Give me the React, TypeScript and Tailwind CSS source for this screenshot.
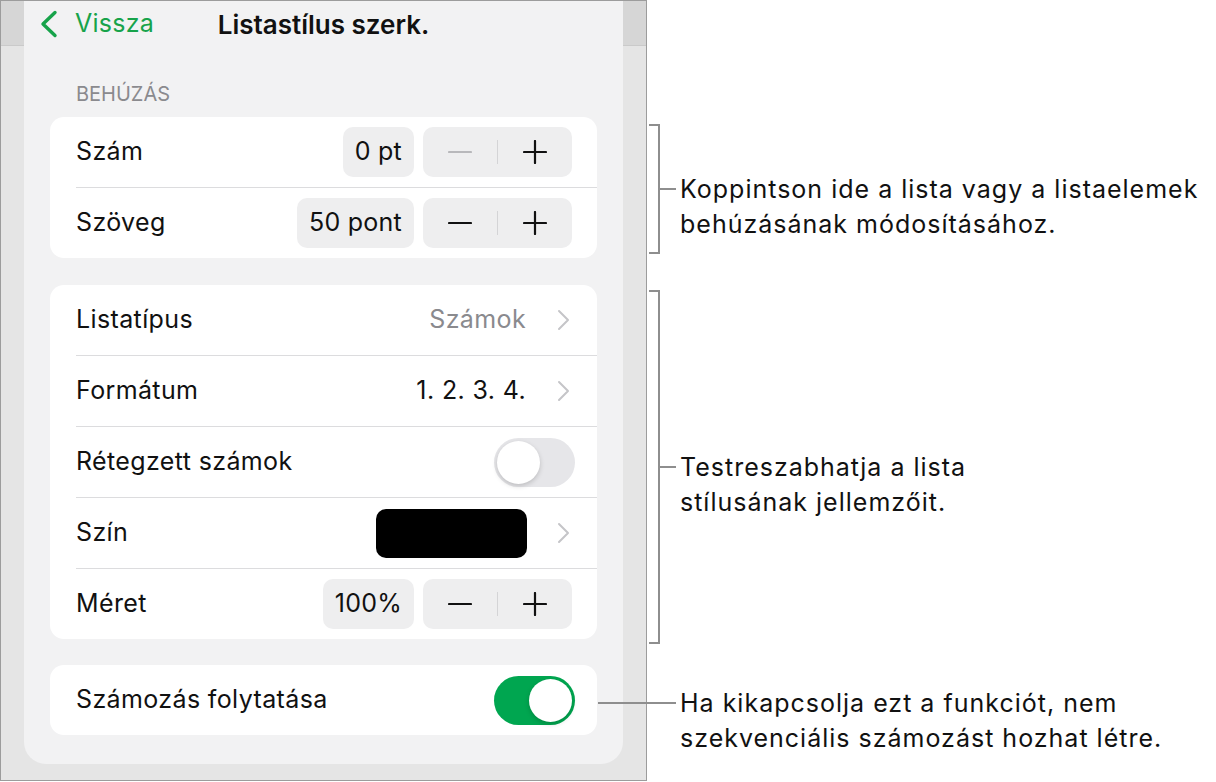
import type { ReactNode } from 'react'

const Chevron = () => (
  <svg width="14" height="24" viewBox="0 0 14 24" className="shrink-0">
    <path d="M3 3l9 9-9 9" stroke="#c5c5c8" strokeWidth="2" fill="none" strokeLinecap="round" strokeLinejoin="round" />
  </svg>
)

const Minus = ({ disabled }: { disabled?: boolean }) => (
  <svg width="24" height="24" viewBox="0 0 24 24">
    <path d="M1 12h22" stroke={disabled ? '#b8b8bb' : '#111'} strokeWidth="2.2" strokeLinecap="round" />
  </svg>
)

const Plus = () => (
  <svg width="24" height="24" viewBox="0 0 24 24">
    <path d="M1 12h22M12 1v22" stroke="#111" strokeWidth="2.2" strokeLinecap="round" />
  </svg>
)

const Stepper = ({ value, minusDisabled }: { value: string; minusDisabled?: boolean }) => (
  <div className="flex items-center gap-[9px]">
    <div className="flex h-[50px] items-center rounded-[10px] bg-[#eeeeef] px-[12px] text-[25px] tracking-[0.01em] text-[#111]">
      {value}
    </div>
    <div className="flex h-[50px] w-[149px] items-center rounded-[10px] bg-[#eeeeef]">
      <div className="flex flex-1 justify-center">
        <Minus disabled={minusDisabled} />
      </div>
      <div className="h-[24px] w-px bg-[#d4d4d6]" />
      <div className="flex flex-1 justify-center">
        <Plus />
      </div>
    </div>
  </div>
)

const Toggle = ({ on }: { on?: boolean }) => (
  <div
    className={
      on
        ? 'flex h-[49px] w-[81px] items-center justify-end rounded-full bg-[#00a650] p-[3px]'
        : 'flex h-[49px] w-[81px] items-center justify-start rounded-full bg-[#e6e6e9] p-[3px]'
    }
  >
    <div className="h-[43px] w-[43px] rounded-full bg-white shadow-[0_2px_5px_rgba(0,0,0,0.18)]" />
  </div>
)

const Row = ({ label, children, last }: { label: string; children?: ReactNode; last?: boolean }) => (
  <div
    className={
      last
        ? 'flex h-[70px] items-center justify-between pr-[25px]'
        : 'flex h-[71px] items-center justify-between border-b border-[#dcdcde] pr-[25px]'
    }
  >
    <span className="text-[25px] tracking-[0.015em] text-[#111]">{label}</span>
    {children}
  </div>
)

const Card = ({ children }: { children: ReactNode }) => (
  <div className="rounded-[14px] bg-white pl-[26px]">{children}</div>
)

const Callout = ({ lines }: { lines: string[] }) => (
  <div className="h-[34px]">
    <p className="pl-[4px] text-[25px] leading-[35px] tracking-[0.04em] text-[#111]">
      {lines.map((l) => (
        <span key={l} className="block whitespace-nowrap">
          {l}
        </span>
      ))}
    </p>
  </div>
)

export default function App() {
  return (
    <div className="flex min-h-[782px] w-[1216px] bg-white font-['Inter',sans-serif]">
      <div className="h-[781px] w-[647px] shrink-0 border border-[#9c9c9c] bg-[linear-gradient(to_bottom,#d6d6d6_44px,#cacaca_44px,#cacaca_45px,#e5e5e5_45px)]">
        <div className="mx-[23px] flex h-[763px] flex-col rounded-b-[22px] bg-[#f2f2f3] px-[26px]">
          <div className="-mx-[26px] grid h-[46px] grid-cols-[1fr_auto_1fr] items-center px-[15px]">
            <div className="flex items-center gap-[17px] text-[25px] tracking-[0.01em] text-[#17a34a]">
              <svg width="19" height="28" viewBox="0 0 19 28">
                <path d="M16 2.5L4 14l12 11.5" stroke="#17a34a" strokeWidth="3.4" fill="none" strokeLinecap="round" strokeLinejoin="round" />
              </svg>
              <span>Vissza</span>
            </div>
            <div className="text-[26px] font-semibold text-[#111]">Listastílus szerk.</div>
            <div />
          </div>
          <div className="pl-[26px] pt-[36px] pb-[12px] text-[20px] leading-[22px] text-[#8a8a8e]">BEHÚZÁS</div>
          <Card>
            <Row label="Szám">
              <Stepper value="0 pt" minusDisabled />
            </Row>
            <Row label="Szöveg" last>
              <Stepper value="50 pont" />
            </Row>
          </Card>
          <div className="h-[27px]" />
          <Card>
            <Row label="Listatípus">
              <div className="flex items-center gap-[30px] pr-[2px]">
                <span className="text-[25px] tracking-[0.015em] text-[#8a8a8e]">Számok</span>
                <Chevron />
              </div>
            </Row>
            <Row label="Formátum">
              <div className="flex items-center gap-[30px] pr-[2px]">
                <span className="text-[25px] tracking-[0.015em] text-[#111]">1. 2. 3. 4.</span>
                <Chevron />
              </div>
            </Row>
            <Row label="Rétegzett számok">
              <div className="-mr-[3px]">
                <Toggle />
              </div>
            </Row>
            <Row label="Szín">
              <div className="flex items-center gap-[29px] pr-[2px]">
                <div className="h-[49px] w-[151px] rounded-[10px] bg-black" />
                <Chevron />
              </div>
            </Row>
            <Row label="Méret" last>
              <Stepper value="100%" />
            </Row>
          </Card>
          <div className="h-[26px]" />
          <Card>
            <Row label="Számozás folytatása" last>
              <div className="-mr-[3px]">
                <Toggle on />
              </div>
            </Row>
          </Card>
        </div>
      </div>

      <div className="flex flex-col pl-[2px] pt-[124px]">
        <div className="flex h-[130px] items-center">
          <div className="h-full w-[11px] border-y-2 border-r-2 border-[#8e8e8e]" />
          <div className="h-[2px] w-[16px] bg-[#8e8e8e]" />
          <Callout lines={['Koppintson ide a lista vagy a listaelemek', 'behúzásának módosításához.']} />
        </div>
        <div className="mt-[36px] flex h-[354px] items-center">
          <div className="h-full w-[11px] border-y-2 border-r-2 border-[#8e8e8e]" />
          <div className="h-[2px] w-[16px] bg-[#8e8e8e]" />
          <Callout lines={['Testreszabhatja a lista', 'stílusának jellemzőit.']} />
        </div>
        <div className="mt-[42px] flex items-center">
          <div className="relative -ml-[51px] h-[2px] w-[78px] bg-[#8e8e8e]" />
          <Callout lines={['Ha kikapcsolja ezt a funkciót, nem', 'szekvenciális számozást hozhat létre.']} />
        </div>
      </div>
    </div>
  )
}
